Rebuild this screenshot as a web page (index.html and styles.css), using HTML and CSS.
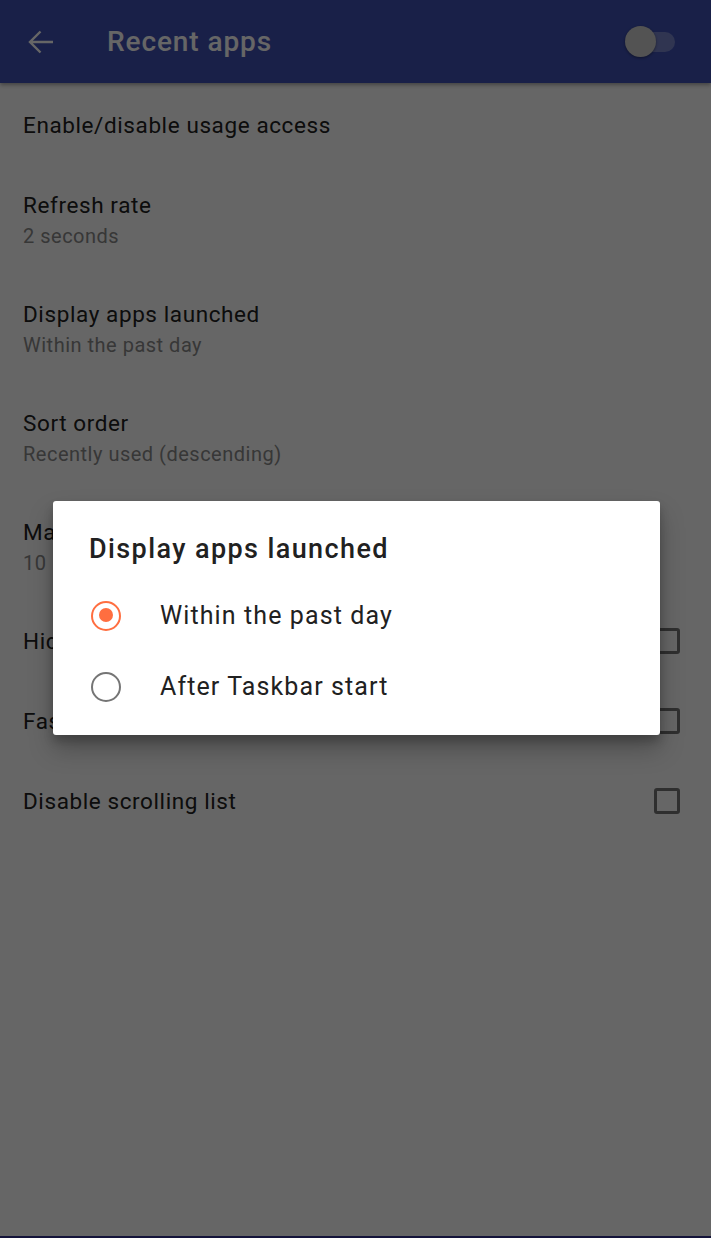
FILE: index.html
```html
<!DOCTYPE html>
<html lang="en">
<head>
<meta charset="utf-8">
<title>Recent apps</title>
<link rel="stylesheet" href="styles.css">
</head>
<body>
<div class="screen">
  <header class="appbar">
    <button class="back" aria-label="Back">
      <svg width="28" height="26" viewBox="0 0 28 26"><path d="M26 13H3M13.5 2.5L3 13l10.5 10.5" fill="none" stroke="currentColor" stroke-width="2.4"/></svg>
    </button>
    <h1 class="appbar-title">Recent apps</h1>
    <div class="switch"><span class="switch-track"></span><span class="switch-thumb"></span></div>
  </header>
  <main class="prefs">
    <div class="pref pref-single first"><span class="pref-title">Enable/disable usage access</span></div>
    <div class="pref pref-double"><span class="pref-title">Refresh rate</span><span class="pref-sub">2 seconds</span></div>
    <div class="pref pref-double"><span class="pref-title">Display apps launched</span><span class="pref-sub">Within the past day</span></div>
    <div class="pref pref-double"><span class="pref-title">Sort order</span><span class="pref-sub">Recently used (descending)</span></div>
    <div class="pref pref-double"><span class="pref-title">Max number of apps to display</span><span class="pref-sub">10</span></div>
    <div class="pref pref-single"><span class="pref-title">Hide app currently in foreground</span><span class="checkbox"></span></div>
    <div class="pref pref-single"><span class="pref-title">Fast app switching</span><span class="checkbox"></span></div>
    <div class="pref pref-single"><span class="pref-title">Disable scrolling list</span><span class="checkbox"></span></div>
  </main>
  <div class="navstrip"></div>
  <div class="scrim"></div>
  <div class="dialog" role="dialog">
    <h2 class="dialog-title">Display apps launched</h2>
    <div class="option"><span class="radio checked"></span><span class="option-label">Within the past day</span></div>
    <div class="option"><span class="radio"></span><span class="option-label">After Taskbar start</span></div>
  </div>
</div>
</body>
</html>
```
FILE: styles.css
```css
* { box-sizing: border-box; }
html, body { margin: 0; padding: 0; }
body { font-family: Roboto, "Noto Sans", sans-serif; background: #fff; }

.screen {
  position: relative;
  width: 711px;
  height: 1238px;
  overflow: hidden;
  display: flex;
  flex-direction: column;
  background: #fff;
}

.appbar {
  height: 83px;
  flex: none;
  background: #3f51b5;
  display: flex;
  align-items: center;
  padding: 0 36px 0 27px;
  color: #fff;
  box-shadow: 0 2px 4px rgba(0,0,0,0.35);
  position: relative;
  z-index: 1;
}
.back {
  background: none;
  border: 0;
  padding: 0;
  color: #fff;
  width: 28px;
  height: 26px;
  display: flex;
}
.appbar-title {
  margin: 0 0 0 52px;
  font-size: 28px;
  font-weight: 500;
  flex: 1;
  letter-spacing: 0.9px;
}
.switch {
  position: relative;
  width: 50px;
  height: 32px;
}
.switch-track {
  position: absolute;
  left: 2px; right: 0;
  top: 6px;
  height: 20px;
  border-radius: 10px;
  background: rgba(255,255,255,0.3);
}
.switch-thumb {
  position: absolute;
  left: 0; top: 0;
  width: 31px; height: 31px;
  border-radius: 50%;
  background: #cfcfcf;
  box-shadow: 0 1px 3px rgba(0,0,0,0.4);
}

.prefs {
  flex: 1;
  padding-top: 2px;
  display: flex;
  flex-direction: column;
}
.pref {
  display: flex;
  padding: 0 31px 0 23px;
}
.pref-single {
  height: 80px;
  align-items: center;
  justify-content: space-between;
}
.pref-double {
  height: 109px;
  flex-direction: column;
  padding-top: 25px;
}
.pref-title {
  font-size: 22.5px;
  line-height: 30px;
  letter-spacing: 0.6px;
  color: #212121;
  white-space: nowrap;
}
.pref-sub {
  font-size: 20px;
  line-height: 32px;
  letter-spacing: 0.5px;
  color: #8a8a8a;
}
.checkbox {
  width: 26px;
  height: 26px;
  border: 3px solid #757575;
  border-radius: 3px;
  flex: none;
}

.navstrip {
  height: 2px;
  flex: none;
  background: #333392;
}

.scrim {
  position: absolute;
  inset: 0;
  background: rgba(0,0,0,0.6);
  z-index: 2;
}

.dialog {
  position: absolute;
  left: 53px;
  top: 501px;
  width: 607px;
  height: 234px;
  background: #fff;
  border-radius: 3px;
  z-index: 3;
  box-shadow: 0 14px 24px rgba(0,0,0,0.25), 0 6px 10px rgba(0,0,0,0.2);
  padding-top: 31px;
}
.dialog-title {
  margin: 0 0 0 36px;
  font-size: 27px;
  line-height: 34px;
  font-weight: 500;
  letter-spacing: 1.4px;
  color: #212121;
}
.option {
  display: flex;
  align-items: center;
  height: 71px;
  padding-left: 38px;
}
.dialog-title + .option { margin-top: 14px; }
.radio {
  width: 30px;
  height: 30px;
  border-radius: 50%;
  border: 2.5px solid #757575;
  flex: none;
  position: relative;
}
.radio.checked { border-color: #ff6e40; }
.radio.checked::after {
  content: "";
  position: absolute;
  left: 5.5px; top: 5.5px;
  width: 14px; height: 14px;
  border-radius: 50%;
  background: #ff6e40;
}
.option-label {
  margin-left: 39px;
  font-size: 25px;
  letter-spacing: 1.1px;
  color: #212121;
}
```
